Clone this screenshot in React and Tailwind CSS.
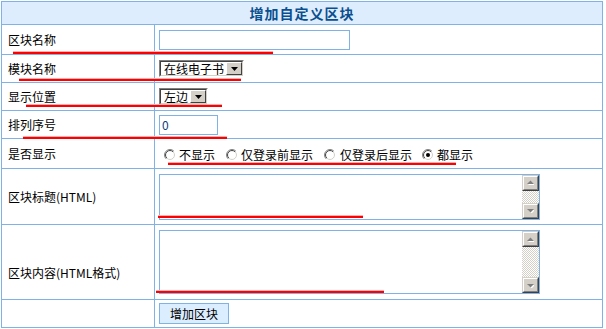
import React from "react";

const B = "border-[#7fb2e5]";

function Radio({ checked, id }) {
  return (
    <svg width="12" height="12" viewBox="0 0 12 12" className="shrink-0">
      <defs>
        <linearGradient id={`o${id}`} x1="0" y1="0" x2="1" y2="1">
          <stop offset="0.45" stopColor="#808080" />
          <stop offset="0.55" stopColor="#ffffff" />
        </linearGradient>
        <linearGradient id={`i${id}`} x1="0" y1="0" x2="1" y2="1">
          <stop offset="0.45" stopColor="#404040" />
          <stop offset="0.55" stopColor="#d4d0c8" />
        </linearGradient>
      </defs>
      <circle cx="6" cy="6" r="5.5" fill="none" stroke={`url(#o${id})`} />
      <circle cx="6" cy="6" r="4.5" fill="#fff" stroke={`url(#i${id})`} />
      {checked && <circle cx="6" cy="6" r="2" fill="#000" />}
    </svg>
  );
}

function ArrowBtn({ dir, dark }) {
  return (
    <div className="w-[17px] h-[16px] shrink-0 border border-t-[#d4d0c8] border-l-[#d4d0c8] border-b-[#404040] border-r-[#404040]">
      <div className="w-full h-full bg-[#d4d0c8] border border-t-white border-l-white border-b-[#808080] border-r-[#808080] flex items-center justify-center">
        <svg width="7" height="5" viewBox="0 0 7 5">
          {dark ? (
            <polygon points="0,1 7,1 3.5,4.5" fill="#000" />
          ) : dir === "up" ? (
            <>
              <polygon points="1,5 8,5 4.5,1.5" fill="#fff" />
              <polygon points="0,4 7,4 3.5,0.5" fill="#808080" />
            </>
          ) : (
            <>
              <polygon points="1,2 8,2 4.5,5.5" fill="#fff" />
              <polygon points="0,1 7,1 3.5,4.5" fill="#808080" />
            </>
          )}
        </svg>
      </div>
    </div>
  );
}

function Select({ text, w }) {
  return (
    <div className={`flex h-[17px] ${w} border border-t-[#808080] border-l-[#808080] border-b-white border-r-white`}>
      <div className="flex flex-1 border border-t-[#404040] border-l-[#404040] border-b-[#d4d0c8] border-r-[#d4d0c8] bg-white">
        <div className="flex-1 pl-[3px] text-[12px] leading-[13px] text-black">{text}</div>
        <div className="w-[16px] h-full bg-[#d4d0c8] border border-t-white border-l-white border-b-[#404040] border-r-[#404040] flex items-center justify-center">
          <svg width="7" height="4" viewBox="0 0 7 4">
            <polygon points="0,0 7,0 3.5,4" fill="#000" />
          </svg>
        </div>
      </div>
    </div>
  );
}

function TextArea({ h, track }) {
  return (
    <div className={`flex w-[381px] ${h} border ${B} bg-white`}>
      <div className="flex-1" />
      <div className="flex flex-col w-[17px]">
        <ArrowBtn dir="up" />
        <div className={`${track} bg-[image:repeating-conic-gradient(#d4d0c8_0%_25%,#ffffff_0%_50%)] bg-[length:2px_2px]`} />
        <ArrowBtn dir="down" />
      </div>
    </div>
  );
}

function Row({ h, label, labelPad = "", cellPad = "pl-[4px]", children }) {
  return (
    <div className={`flex border-t ${B} ${h}`}>
      <div className={`w-[153px] shrink-0 border-r ${B} flex items-center pl-[6px] ${labelPad}`}>
        <span className="text-[12px] leading-[14px] text-black">{label}</span>
      </div>
      <div className={`flex-1 flex items-center ${cellPad}`}>{children}</div>
    </div>
  );
}

const reds = [
  { c: "left-[13px] top-[52px] w-[260px]" },
  { c: "left-[19px] top-[79px] w-[222px]" },
  { c: "left-[26px] top-[105px] w-[196px]" },
  { c: "left-[23px] top-[137px] w-[204px]" },
  { c: "left-[168px] top-[163px] w-[288px]" },
  { c: "left-[158px] top-[216px] w-[205px]" },
  { c: "left-[156px] top-[291px] w-[228px]" },
];

export default function App() {
  return (
    <div className="relative w-[606px] h-[329px] bg-white font-['Noto_Sans_CJK_SC','Liberation_Sans',sans-serif]">
      <div className="pl-[1px] pt-[1px]">
        <div className={`w-[602px] border ${B} flex flex-col`}>
          <div className="h-[22px] bg-[#deedfd] flex items-center justify-center">
            <span className="text-[14px] leading-[16px] font-bold tracking-[1px] text-[#0b4f8f]">增加自定义区块</span>
          </div>
          <Row h="h-[30px]" label="区块名称">
            <div className={`w-[191px] h-[20px] border ${B} bg-white`} />
          </Row>
          <Row h="h-[28px]" label="模块名称">
            <Select text="在线电子书" w="w-[85px]" />
          </Row>
          <Row h="h-[28px]" label="显示位置">
            <Select text="左边" w="w-[49px]" />
          </Row>
          <Row h="h-[28px]" label="排列序号">
            <div className={`w-[59px] h-[20px] border ${B} bg-white flex items-center pl-[2px]`}>
              <span className="text-[12px] leading-[14px] text-[#0b3d7a]">0</span>
            </div>
          </Row>
          <Row h="h-[30px]" label="是否显示" cellPad="pl-[9px] pt-[3px]">
            <div className="flex items-center text-[12px] leading-[14px] text-black">
              <Radio id="a" />
              <span className="ml-[3px]">不显示</span>
              <span className="ml-[11px]"><Radio id="b" /></span>
              <span className="ml-[3px]">仅登录前显示</span>
              <span className="ml-[11px]"><Radio id="c" /></span>
              <span className="ml-[4px]">仅登录后显示</span>
              <span className="ml-[10px]"><Radio id="d" checked /></span>
              <span className="ml-[3px]">都显示</span>
            </div>
          </Row>
          <Row h="h-[56px]" label="区块标题(HTML)">
            <TextArea h="h-[46px]" track="h-[12px]" />
          </Row>
          <Row h="h-[75px]" label="区块内容(HTML格式)" labelPad="pt-[22px]">
            <TextArea h="h-[64px]" track="h-[30px]" />
          </Row>
          <Row h="h-[28px]" label="">
            <div className={`w-[70px] h-[21px] border ${B} bg-[#dbeeff] flex items-center justify-center`}>
              <span className="text-[12px] leading-[14px] text-black">增加区块</span>
            </div>
          </Row>
        </div>
      </div>
      {reds.map((r, i) => (
        <div key={i} className={`absolute h-[2px] bg-[#ff0000] shadow-[0_-1px_0_#f8b0b0] ${r.c}`} />
      ))}
    </div>
  );
}
